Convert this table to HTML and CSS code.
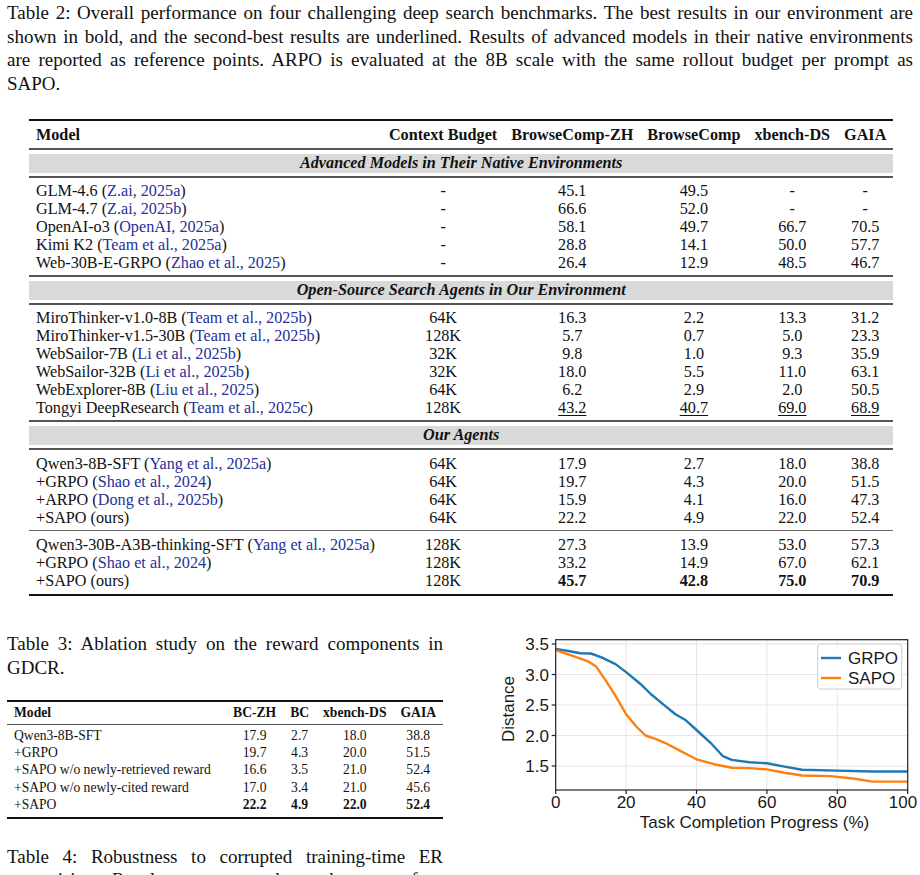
FILE: index.html
```html
<!DOCTYPE html>
<html lang="en">
<head>
    <meta charset="UTF-8">
    <title>Deep Search Benchmarks - Results</title>
    <link rel="stylesheet" href="styles.css">
</head>
<body>
<div class="page">
    <p class="caption">
        <span class="line">Table 2: Overall performance on four challenging deep search benchmarks. The best results in our environment are</span>
        <span class="line">shown in bold, and the second-best results are underlined. Results of advanced models in their native environments</span>
        <span class="line">are reported as reference points. ARPO is evaluated at the 8B scale with the same rollout budget per prompt as</span>
        SAPO.
    </p>

    <table class="results">
        <thead>
            <tr>
                <th class="name">Model</th>
                <th>Context Budget</th>
                <th>BrowseComp-ZH</th>
                <th>BrowseComp</th>
                <th>xbench-DS</th>
                <th>GAIA</th>
            </tr>
        </thead>
        <tbody>
            <tr class="group"><td colspan="6">Advanced Models in Their Native Environments</td></tr>
            <tr class="first"><td class="name">GLM-4.6 (<span class="cite">Z.ai, 2025a</span>)</td><td>-</td><td>45.1</td><td>49.5</td><td>-</td><td>-</td></tr>
            <tr><td class="name">GLM-4.7 (<span class="cite">Z.ai, 2025b</span>)</td><td>-</td><td>66.6</td><td>52.0</td><td>-</td><td>-</td></tr>
            <tr><td class="name">OpenAI-o3 (<span class="cite">OpenAI, 2025a</span>)</td><td>-</td><td>58.1</td><td>49.7</td><td>66.7</td><td>70.5</td></tr>
            <tr><td class="name">Kimi K2 (<span class="cite">Team et al., 2025a</span>)</td><td>-</td><td>28.8</td><td>14.1</td><td>50.0</td><td>57.7</td></tr>
            <tr class="last"><td class="name">Web-30B-E-GRPO (<span class="cite">Zhao et al., 2025</span>)</td><td>-</td><td>26.4</td><td>12.9</td><td>48.5</td><td>46.7</td></tr>
        </tbody>
        <tbody>
            <tr class="group"><td colspan="6">Open-Source Search Agents in Our Environment</td></tr>
            <tr class="first"><td class="name">MiroThinker-v1.0-8B (<span class="cite">Team et al., 2025b</span>)</td><td>64K</td><td>16.3</td><td>2.2</td><td>13.3</td><td>31.2</td></tr>
            <tr><td class="name">MiroThinker-v1.5-30B (<span class="cite">Team et al., 2025b</span>)</td><td>128K</td><td>5.7</td><td>0.7</td><td>5.0</td><td>23.3</td></tr>
            <tr><td class="name">WebSailor-7B (<span class="cite">Li et al., 2025b</span>)</td><td>32K</td><td>9.8</td><td>1.0</td><td>9.3</td><td>35.9</td></tr>
            <tr><td class="name">WebSailor-32B (<span class="cite">Li et al., 2025b</span>)</td><td>32K</td><td>18.0</td><td>5.5</td><td>11.0</td><td>63.1</td></tr>
            <tr><td class="name">WebExplorer-8B (<span class="cite">Liu et al., 2025</span>)</td><td>64K</td><td>6.2</td><td>2.9</td><td>2.0</td><td>50.5</td></tr>
            <tr class="last"><td class="name">Tongyi DeepResearch (<span class="cite">Team et al., 2025c</span>)</td><td>128K</td><td><u>43.2</u></td><td><u>40.7</u></td><td><u>69.0</u></td><td><u>68.9</u></td></tr>
        </tbody>
        <tbody>
            <tr class="group"><td colspan="6">Our Agents</td></tr>
            <tr class="first wide"><td class="name">Qwen3-8B-SFT (<span class="cite">Yang et al., 2025a</span>)</td><td>64K</td><td>17.9</td><td>2.7</td><td>18.0</td><td>38.8</td></tr>
            <tr><td class="name">+GRPO (<span class="cite">Shao et al., 2024</span>)</td><td>64K</td><td>19.7</td><td>4.3</td><td>20.0</td><td>51.5</td></tr>
            <tr><td class="name">+ARPO (<span class="cite">Dong et al., 2025b</span>)</td><td>64K</td><td>15.9</td><td>4.1</td><td>16.0</td><td>47.3</td></tr>
            <tr class="last"><td class="name">+SAPO (ours)</td><td>64K</td><td>22.2</td><td>4.9</td><td>22.0</td><td>52.4</td></tr>
            <tr class="split"><td class="name">Qwen3-30B-A3B-thinking-SFT (<span class="cite">Yang et al., 2025a</span>)</td><td>128K</td><td>27.3</td><td>13.9</td><td>53.0</td><td>57.3</td></tr>
            <tr><td class="name">+GRPO (<span class="cite">Shao et al., 2024</span>)</td><td>128K</td><td>33.2</td><td>14.9</td><td>67.0</td><td>62.1</td></tr>
            <tr class="end"><td class="name">+SAPO (ours)</td><td>128K</td><td><b>45.7</b></td><td><b>42.8</b></td><td><b>75.0</b></td><td><b>70.9</b></td></tr>
        </tbody>
    </table>

    <div class="lower">
        <div class="left-col">
            <p class="caption">Table 3: Ablation study on the reward components in GDCR.</p>

            <table class="ablation">
                <thead>
                    <tr>
                        <th class="name">Model</th>
                        <th>BC-ZH</th>
                        <th>BC</th>
                        <th>xbench-DS</th>
                        <th>GAIA</th>
                    </tr>
                </thead>
                <tbody>
                    <tr class="first"><td class="name">Qwen3-8B-SFT</td><td>17.9</td><td>2.7</td><td>18.0</td><td>38.8</td></tr>
                    <tr><td class="name">+GRPO</td><td>19.7</td><td>4.3</td><td>20.0</td><td>51.5</td></tr>
                    <tr><td class="name">+SAPO w/o newly-retrieved reward</td><td>16.6</td><td>3.5</td><td>21.0</td><td>52.4</td></tr>
                    <tr><td class="name">+SAPO w/o newly-cited reward</td><td>17.0</td><td>3.4</td><td>21.0</td><td>45.6</td></tr>
                    <tr class="end"><td class="name">+SAPO</td><td><b>22.2</b></td><td><b>4.9</b></td><td><b>22.0</b></td><td><b>52.4</b></td></tr>
                </tbody>
            </table>

            <p class="caption table4">Table 4: Robustness to corrupted training-time ER supervision. Results are reported on the same four benchmarks under identical settings.</p>
        </div>

        <svg class="chart" width="425" height="210" viewBox="0 0 425 210">
            <!-- grid -->
            <g class="grid">
                <line x1="131.1" y1="7.7" x2="131.1" y2="158"/>
                <line x1="201.5" y1="7.7" x2="201.5" y2="158"/>
                <line x1="271.9" y1="7.7" x2="271.9" y2="158"/>
                <line x1="342.3" y1="7.7" x2="342.3" y2="158"/>
                <line x1="60.7" y1="12" x2="412.7" y2="12"/>
                <line x1="60.7" y1="42.5" x2="412.7" y2="42.5"/>
                <line x1="60.7" y1="73" x2="412.7" y2="73"/>
                <line x1="60.7" y1="103.5" x2="412.7" y2="103.5"/>
                <line x1="60.7" y1="134" x2="412.7" y2="134"/>
            </g>

            <!-- data -->
            <polyline class="line grpo" points="60.7,16.9 74.8,19.3 85.3,21.2 95.9,21.5 106.5,25.4 120.5,32.1 131.1,40.1 145.2,51.7 155.7,62 169.8,73.6 180.4,82.2 190.9,88.3 201.5,98 215.6,110.8 227.9,124.2 236.7,127.9 254.3,130.3 271.9,131.3 289.5,134.6 307.1,137.7 342.3,138.6 377.5,139.5 412.7,139.5"/>
            <polyline class="line sapo" points="60.7,18.1 78.3,24.2 92.4,29.1 101.2,34.6 110,47.4 120.5,63.9 131.1,82.2 141.7,95 150.5,103.5 161,107.2 169.8,110.8 183.9,118.1 201.5,127.3 219.1,132.2 236.7,135.8 254.3,136.1 271.9,137.4 289.5,140.7 307.1,143.5 335.3,144.1 359.9,146.8 377.5,149.6 412.7,149.6"/>

            <!-- axes -->
            <rect class="frame" x="60.7" y="7.7" width="352" height="150.3"/>
            <g class="ticks">
                <line x1="56.7" y1="12" x2="60.7" y2="12"/>
                <line x1="56.7" y1="42.5" x2="60.7" y2="42.5"/>
                <line x1="56.7" y1="73" x2="60.7" y2="73"/>
                <line x1="56.7" y1="103.5" x2="60.7" y2="103.5"/>
                <line x1="56.7" y1="134" x2="60.7" y2="134"/>
                <line x1="60.7" y1="158" x2="60.7" y2="162"/>
                <line x1="131.1" y1="158" x2="131.1" y2="162"/>
                <line x1="201.5" y1="158" x2="201.5" y2="162"/>
                <line x1="271.9" y1="158" x2="271.9" y2="162"/>
                <line x1="342.3" y1="158" x2="342.3" y2="162"/>
                <line x1="412.7" y1="158" x2="412.7" y2="162"/>
            </g>
            <g class="tick-label y-label">
                <text x="54" y="18">3.5</text>
                <text x="54" y="48.5">3.0</text>
                <text x="54" y="79">2.5</text>
                <text x="54" y="109.5">2.0</text>
                <text x="54" y="140">1.5</text>
            </g>
            <g class="tick-label x-label">
                <text x="60.7" y="176">0</text>
                <text x="131.1" y="176">20</text>
                <text x="201.5" y="176">40</text>
                <text x="271.9" y="176">60</text>
                <text x="342.3" y="176">80</text>
                <text x="408" y="176">100</text>
            </g>
            <text class="axis-title" x="259.5" y="196">Task Completion Progress (%)</text>
            <text class="axis-title" transform="translate(19 77) rotate(-90)">Distance</text>

            <!-- legend -->
            <rect class="legend" x="322.7" y="12" width="84" height="45" rx="3"/>
            <line class="line grpo" x1="326" y1="26" x2="346" y2="26"/>
            <line class="line sapo" x1="326" y1="46" x2="346" y2="46"/>
            <text class="legend-text" x="353" y="32">GRPO</text>
            <text class="legend-text" x="353" y="52">SAPO</text>
        </svg>
    </div>
</div>
</body>
</html>
```

FILE: styles.css
```css
* {
    margin: 0;
    padding: 0;
    box-sizing: border-box;
}

body {
    font-family: 'Liberation Serif', 'Times New Roman', serif;
    color: #111111;
    background: #ffffff;
}

.page {
    width: 920px;
    padding: 1px 7px 0;
}

.caption {
    font-size: 19px;
    line-height: 23.7px;
    text-align: justify;
}

/* keep the paper's line breaks, each full line stretched edge to edge */
.caption .line {
    display: block;
    text-align-last: justify;
}

.cite {
    color: #28309a;
}

/* main results table */
.results {
    width: 862px;
    margin: 23px 0 0 22px;
    border-collapse: collapse;
    font-size: 16.2px;
    line-height: 18px;
}

.results th,
.results td {
    padding: 0 7px;
    white-space: nowrap;
    text-align: center;
    font-weight: normal;
}

.results th {
    font-weight: bold;
    border-top: 2px solid #111111;
    padding-top: 5px;
    padding-bottom: 4px;
}

.results .name {
    width: 100%;
    text-align: left;
}

.results .group td {
    border-top: 2px solid #555555;
    padding: 4px 0 3px;
    background: #d9d9d9;
    background-clip: content-box;
    font-weight: bold;
    font-style: italic;
    line-height: 19px;
}

.results .first td {
    border-top: 2px solid #555555;
    padding-top: 4px;
}

.results .first.wide td {
    padding-top: 5px;
}

.results .last td {
    padding-bottom: 3px;
}

.results .split td {
    border-top: 1px solid #666666;
    padding-top: 5px;
}

.results .end td {
    border-bottom: 2px solid #111111;
    padding-bottom: 4px;
}

u {
    text-underline-offset: 2px;
}

/* lower half: ablation table + chart */
.lower {
    display: flex;
    gap: 52px;
    margin-top: 36px;
}

.left-col {
    width: 436px;
    flex-shrink: 0;
}

.ablation {
    width: 436px;
    margin-top: 21px;
    border-collapse: collapse;
    font-size: 13.6px;
    line-height: 17.4px;
}

.ablation th,
.ablation td {
    padding: 0 7px;
    white-space: nowrap;
    text-align: center;
}

.ablation th {
    border-top: 2px solid #111111;
    border-bottom: 1px solid #555555;
    padding-top: 2px;
    padding-bottom: 2px;
}

.ablation .name {
    width: 100%;
    text-align: left;
}

.ablation .first td {
    padding-top: 2px;
}

.ablation .end td {
    border-bottom: 2px solid #111111;
    padding-bottom: 3px;
}

.table4 {
    margin-top: 26px;
}

/* chart */
.chart {
    flex-shrink: 0;
    font-family: 'Liberation Sans', Arial, sans-serif;
}

.grid line {
    stroke: #e6e6e6;
    stroke-width: 1;
}

.frame {
    fill: none;
    stroke: #222222;
    stroke-width: 1.2;
}

.ticks line {
    stroke: #222222;
    stroke-width: 1.2;
}

.line {
    fill: none;
    stroke-width: 2.4;
    stroke-linejoin: round;
}

.grpo {
    stroke: #1f77b4;
}

.sapo {
    stroke: #ff7f0e;
}

.tick-label text,
.axis-title,
.legend-text {
    font-size: 17px;
    fill: #1a1a1a;
}

.y-label text {
    text-anchor: end;
}

.x-label text,
.axis-title {
    text-anchor: middle;
}

.legend {
    fill: #ffffff;
    fill-opacity: 0.85;
    stroke: #cccccc;
    stroke-width: 1;
}
```
